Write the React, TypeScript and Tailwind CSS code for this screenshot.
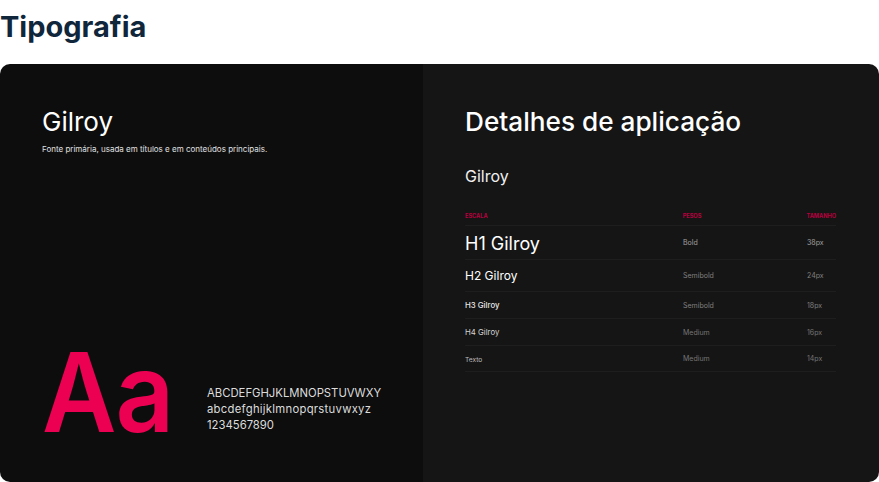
const ROWS = [
  { name: 'H1 Gilroy', nameClass: 'pt-[1px] text-[18px] font-normal text-white', weight: 'Bold', size: '38px', height: 'h-[34px]', muted: 'text-[#a0a0a0]' },
  { name: 'H2 Gilroy', nameClass: 'pt-[1px] text-[12px] font-normal text-white', weight: 'Semibold', size: '24px', height: 'h-[32px]', muted: 'text-[#808080]' },
  { name: 'H3 Gilroy', nameClass: 'pt-[2px] text-[7.8px] font-medium text-[#e8e8e8]', weight: 'Semibold', size: '18px', height: 'h-[27px]', muted: 'text-[#808080]' },
  { name: 'H4 Gilroy', nameClass: 'pt-[2px] text-[7.8px] font-normal text-[#d4d4d4]', weight: 'Medium', size: '16px', height: 'h-[27px]', muted: 'text-[#757575]' },
  { name: 'Texto', nameClass: 'pt-[4px] text-[6.6px] font-normal text-[#bdbdbd]', weight: 'Medium', size: '14px', height: 'h-[26px]', muted: 'text-[#757575]' },
];

export default function App() {
  return (
    <div className="h-[482px] w-[879px] overflow-hidden bg-white font-['Inter',sans-serif]">
      <h1 className="flex h-[64px] items-start pt-[9px] text-[29px] leading-[36px] font-bold text-[#10263b]">
        Tipografia
      </h1>
      <div className="flex h-[418px] overflow-hidden rounded-[10px]">
        <section className="flex w-[423px] shrink-0 flex-col bg-[#0d0d0d] pt-[42px] pl-[42px]">
          <h2 className="text-[26px] leading-[32px] font-normal text-white">Gilroy</h2>
          <p className="mt-[5px] text-[8px] leading-[12px] text-[#e0e0e0]">
            Fonte primária, usada em títulos e em conteúdos principais.
          </p>
          <div className="mt-[181px] flex items-center">
            <span className="w-[165px] origin-left scale-x-[0.93] text-[110px] leading-[112px] font-semibold tracking-[-1px] text-[#eb0052]">Aa</span>
            <div className="pt-[33px] text-[11.3px] leading-[16px] text-[#dcdcdc]">
              <div>ABCDEFGHJKLMNOPSTUVWXY</div>
              <div className="tracking-[0.27px]">abcdefghijklmnopqrstuvwxyz</div>
              <div>1234567890</div>
            </div>
          </div>
        </section>
        <section className="min-w-0 flex-1 bg-[#151515] pt-[42px] pr-[43px] pl-[42px]">
          <h2 className="text-[26.2px] leading-[32px] font-medium text-white">Detalhes de aplicação</h2>
          <h3 className="mt-[26px] text-[16px] leading-[24px] font-normal text-[#f0f0f0]">Gilroy</h3>
          <div className="mt-[18px] flex h-[20px] items-center border-b border-[#1e1e1e] pt-[2px] text-[5.6px] font-bold text-[#b8003f] uppercase">
            <span className="w-[218px]">Escala</span>
            <span className="w-[124px]">Pesos</span>
            <span>Tamanho</span>
          </div>
          {ROWS.map((row) => (
            <div key={row.name} className={`flex items-center border-b border-[#1e1e1e] ${row.height}`}>
              <span className={`w-[218px] ${row.nameClass}`}>{row.name}</span>
              <span className={`w-[124px] pt-[2px] text-[7px] ${row.muted}`}>{row.weight}</span>
              <span className={`pt-[2px] text-[7px] ${row.muted}`}>{row.size}</span>
            </div>
          ))}
        </section>
      </div>
    </div>
  );
}
